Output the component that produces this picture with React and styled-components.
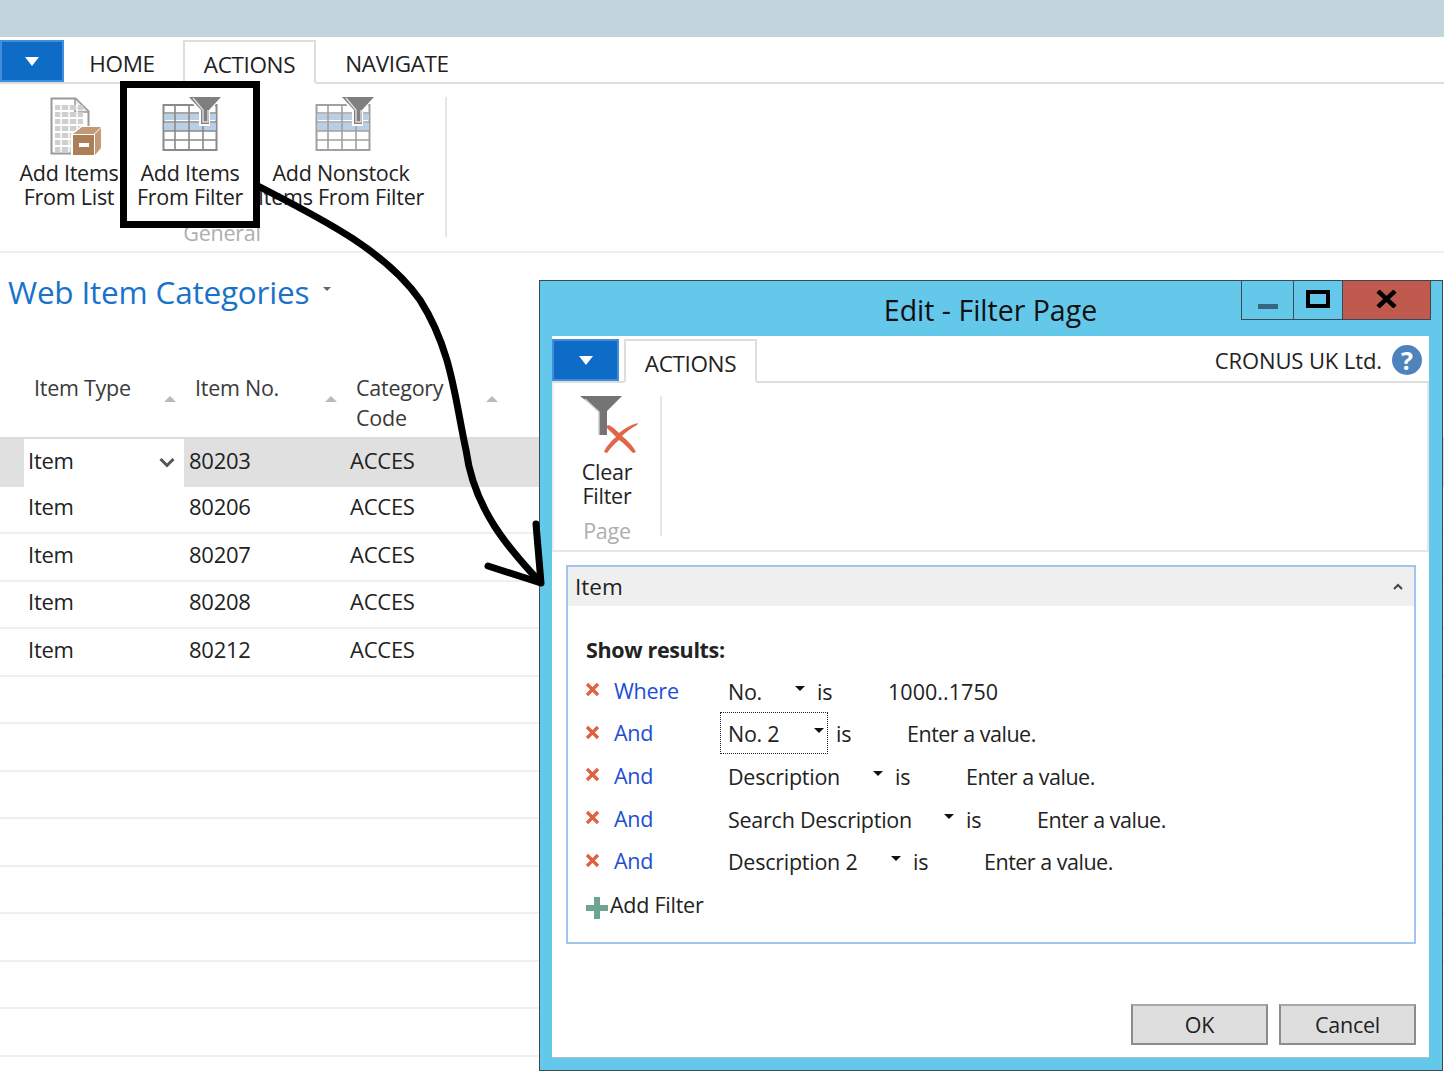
import React from "react";
import styled, { createGlobalStyle } from "styled-components";

const Global = createGlobalStyle`
  html, body { margin: 0; padding: 0; background: #fff; }
  body { font-family: "Open Sans", "Noto Sans", "Liberation Sans", sans-serif; color: #222; font-size: 21.5px; letter-spacing: -0.25px; }
`;

const Page = styled.div`
  position: relative;
  width: 1444px;
  height: 1073px;
  overflow: hidden;
  background: #fff;
`;
const TopBar = styled.div`height: 37px; background: #c3d5dc;`;
const TabRow = styled.div`
  display: flex;
  align-items: flex-end;
  height: ${p => p.$h}px;
  border-bottom: 2px solid #dedede;
  box-sizing: border-box;
`;
const MenuButton = styled.div`
  width: ${p => p.$w}px;
  height: 42px;
  box-sizing: border-box;
  background: #0f6cc6;
  border: 2px solid #3f8fdc;
  display: flex;
  align-items: center;
  justify-content: center;
`;
const Tri = styled.span`
  width: 0; height: 0;
  border-left: 7px solid transparent;
  border-right: 7px solid transparent;
  border-top: 9px solid #fff;
`;
const Tab = styled.div`
  height: ${p => p.$active ? 44 : 42}px;
  margin-bottom: ${p => p.$active ? -2 : 0}px;
  box-sizing: border-box;
  width: ${p => p.$w}px;
  margin-left: ${p => p.$ml || 0}px;
  display: flex;
  align-items: center;
  justify-content: center;
  padding: 4px ${p => p.$pr || 0}px 0 0;
  background: #fff;
  border: ${p => p.$active ? "2px solid #dedede" : "none"};
  border-bottom: ${p => p.$active ? "2px solid #fff" : "none"};
  font-size: 22.5px;
  letter-spacing: -0.35px;
`;
const Ribbon = styled.div`
  display: flex;
  height: 169px;
  box-sizing: border-box;
  padding-top: 13px;
  border-bottom: 2px solid #eee;
`;
const RibbonGroup = styled.div`
  display: flex;
  flex-direction: column;
  align-items: center;
  box-sizing: border-box;
  width: ${p => p.$w}px;
  padding-left: ${p => p.$pl}px;
  height: 141px;
`;
const GroupItems = styled.div`display: flex; align-self: stretch;`;
const GroupLabel = styled.div`
  margin-top: ${p => p.$mt || 12}px;
  color: #aeaeae;
  font-size: 21.5px;
  line-height: 24px;
`;
const Separator = styled.div`
  width: 2px;
  height: 140px;
  background: #e6e6e6;
  margin-left: ${p => p.$ml}px;
`;
const RibbonButton = styled.div`
  width: ${p => p.$w}px;
  display: flex;
  flex-direction: column;
  align-items: center;
  text-align: center;
  line-height: 24px;
  white-space: nowrap;
`;
const IconSlot = styled.div`
  height: ${p => p.$h}px;
  margin-left: ${p => p.$ox || 0}px;
  display: flex;
`;
const Title = styled.div`
  display: flex;
  align-items: center;
  height: 34px;
  margin: 21px 0 0 8px;
  color: #1a73c9;
  font-size: 31.5px;
  letter-spacing: -0.2px;
  gap: 14px;
`;
const TitleCaret = styled.span`
  width: 0; height: 0;
  border-left: 4px solid transparent;
  border-right: 4px solid transparent;
  border-top: 4px solid #666;
  margin-bottom: 4px;
`;
const HeaderRow = styled.div`
  display: flex;
  margin-top: 65px;
  height: 66px;
  padding-left: 28px;
  box-sizing: border-box;
  border-bottom: 2px solid #dcdcdc;
`;
const HeadCell = styled.div`
  width: 161px;
  padding-left: 6px;
  box-sizing: border-box;
  position: relative;
  line-height: 30px;
  color: #3a3a3a;
`;
const SortMark = styled.span`
  position: absolute;
  right: 13px;
  top: 23px;
  width: 0; height: 0;
  border-left: 6px solid transparent;
  border-right: 6px solid transparent;
  border-bottom: 6px solid #bbb;
`;
const Row = styled.div`
  display: flex;
  height: 47.5px;
  box-sizing: border-box;
  align-items: stretch;
  background: ${p => p.$sel ? "#e0e0e0" : "#fff"};
  border-bottom: ${p => p.$sel ? "none" : "2px solid #efefef"};
  padding-left: 24px;
`;
const Cell = styled.div`
  width: ${p => p.$w}px;
  padding-left: ${p => p.$pl}px;
  box-sizing: border-box;
  display: flex;
  align-items: center;
  justify-content: space-between;
  background: ${p => p.$white ? "#fff" : "transparent"};
  padding-bottom: ${p => p.$sel ? 6 : 6}px;
  font-size: 22px;
`;
const Chevron = styled.svg`margin-right: 9px; margin-top: 6px;`;

const Dialog = styled.div`
  position: absolute;
  left: 539px;
  top: 280px;
  width: 904px;
  height: 791px;
  box-sizing: border-box;
  background: #64c8ea;
  border: 1.5px solid #3b4a50;
  display: flex;
  flex-direction: column;
  padding: 0 13px 12px 12px;
`;
const WinBar = styled.div`
  height: 55px;
  position: relative;
  display: flex;
  justify-content: center;
  align-items: flex-end;
  font-size: 28.5px;
  line-height: 38px;
  color: #111;
  letter-spacing: 0;
  padding: 0 0 7px 0;
  box-sizing: border-box;
`;
const WinButtons = styled.div`
  position: absolute;
  right: -2px;
  top: 0;
  display: flex;
  height: 39px;
  border: 1.5px solid #3b4a50;
  border-top: none;
  box-sizing: border-box;
`;
const WinBtn = styled.div`
  width: ${p => p.$w}px;
  background: ${p => p.$red ? "#c0594e" : "transparent"};
  border-left: ${p => p.$first ? "none" : "1.5px solid #3b4a50"};
  box-sizing: border-box;
  display: flex;
  align-items: center;
  justify-content: center;
`;
const MinGlyph = styled.svg`margin-top: 14px;`;
const MaxGlyph = styled.svg`margin-bottom: 2px;`;
const CloseGlyph = styled.svg`margin-bottom: 2px;`;
const Inner = styled.div`
  flex: 1;
  background: #fff;
  display: flex;
  flex-direction: column;
  min-height: 0;
  border-bottom: 1.5px solid #aac4cf;
`;
const Company = styled.div`
  margin-left: auto;
  align-self: center;
  display: flex;
  align-items: center;
  gap: 10px;
  font-size: 22px;
  letter-spacing: -0.1px;
  padding: 2px 7px 0 0;
`;
const DialogActions = styled.div`
  display: flex;
  height: 169px;
  box-sizing: border-box;
  padding-top: 13px;
  border-bottom: 2px solid #e6e6e6;
  border-right: 2px solid #e6e6e6;
  border-left: 2px solid #eee;
`;
const Panel = styled.div`
  margin: 13px 13px 0 14px;
  height: 379px;
  box-sizing: border-box;
  border: 2px solid #a3c4ee;
`;
const PanelHead = styled.div`
  height: 39px;
  background: #efefef;
  display: flex;
  align-items: center;
  justify-content: space-between;
  padding: 0 11px 0 7px;
  font-size: 22.5px;
  letter-spacing: 0;
`;
const PanelBody = styled.div`padding: 29px 0 0 18px;`;
const ShowResults = styled.div`
  font-weight: 700;
  font-size: 21.5px;
  letter-spacing: -0.35px;
  line-height: 30px;
  margin-bottom: 5px;
`;
const FilterRow = styled.div`
  display: flex;
  align-items: center;
  height: 42.6px;
`;
const RemoveSlot = styled.div`width: 28px; display: flex; padding-bottom: 3px; margin-left: -1px; margin-right: 1px;`;
const Conj = styled.div`
  width: 114px;
  color: #1d4fd1;
  padding-bottom: 2px;
`;
const FieldSel = styled.div`
  width: ${p => p.$w}px;
  height: 42px;
  box-sizing: border-box;
  display: flex;
  align-items: center;
  justify-content: space-between;
  padding-right: 12px;
  position: relative;
`;
const FocusRing = styled.span`
  position: absolute;
  left: -8px;
  right: 8px;
  top: -1px;
  bottom: 1px;
  border: 1px dotted #222;
`;
const SmallCaret = styled.span`
  width: 0; height: 0;
  border-left: 5px solid transparent;
  border-right: 5px solid transparent;
  border-top: 5px solid #111;
  margin-bottom: 6px;
`;
const Is = styled.div`width: 71px; margin-left: ${p => p.$ml || 0}px;`;
const Value = styled.div`letter-spacing: ${p => p.$digits ? 0.05 : -0.5}px;`;
const AddFilter = styled.div`
  display: flex;
  align-items: center;
  height: 42px;
  gap: 2px;
  padding-top: 1px;
`;
const PlusGlyph = styled.svg`margin-top: 6px;`;
const Footer = styled.div`
  margin-top: auto;
  display: flex;
  justify-content: flex-end;
  gap: 11px;
  padding: 0 13px 12px 0;
`;
const Btn = styled.div`
  width: 137px;
  height: 41px;
  box-sizing: border-box;
  background: #dedede;
  border: 2px solid #8c8c8c;
  border-top-color: #a8a8a8;
  display: flex;
  align-items: center;
  justify-content: center;
`;
const HelpBadge = styled.div`
  width: 30px;
  height: 30px;
  border-radius: 50%;
  background: #4f83bd;
  color: #fff;
  font-weight: 700;
  font-size: 25px;
  line-height: 30px;
  text-align: center;
  letter-spacing: 0;
`;
const Highlight = styled.div`
  position: absolute;
  left: 120px;
  top: 81px;
  width: 140px;
  height: 147px;
  box-sizing: border-box;
  border: 7px solid #000;
  pointer-events: none;
`;
const ArrowSvg = styled.svg`
  position: absolute;
  left: 0; top: 0;
  pointer-events: none;
`;

const GridIcon = ({ color = "#8c8c8c", funnel = "#7f7f7f" }) => (
  <svg width="60" height="58" viewBox="0 1 60 58">
    <rect x="1.5" y="9" width="53" height="45" fill="#fff" stroke={color} strokeWidth="2" />
    <rect x="2" y="18" width="52" height="6" fill="#b9cfe6" />
    <rect x="2" y="27" width="52" height="8" fill="#b9cfe6" />
    {[12, 26, 40].map(x => <line key={x} x1={x + 1} x2={x + 1} y1="9" y2="54" stroke={color} strokeWidth="1.6" />)}
    {[17, 26, 35, 44].map(y => <line key={y} y1={y} y2={y} x1="2" x2="54" stroke={color} strokeWidth="1.6" />)}
    <path d="M26 1h33L48 16v14h-11V16z" fill="#fff" />
    <path d="M27 1h32L47 14v14h-8V14z" fill={funnel} />
    <path d="M31 2l10 12v12h5V14" fill="none" stroke="#ddd" strokeWidth="1.4" />
  </svg>
);
const ListIcon = () => (
  <svg width="54" height="60" viewBox="0 0 54 60">
    <path d="M1.5 1.5h24l13 13v42h-37z" fill="#fff" stroke="#999" strokeWidth="2" />
    <path d="M25 2v13h13" fill="#eee" stroke="#999" strokeWidth="1.5" />
    {[8, 15, 22, 29, 36, 43, 50].map(y => <rect key={y} x="5" y={y} width="28" height="5" fill="#cfcfcf" />)}
    {[11, 19, 27].map(x => <line key={x} x1={x} x2={x} y1="7" y2="55" stroke="#fff" strokeWidth="1.5" />)}
    <path d="M21 37l10-8h21v29H21z" fill="#fff" />
    <path d="M23 37l9-7h19l-7 7z" fill="#c39a75" />
    <rect x="23" y="38" width="21" height="20" fill="#ad7f58" />
    <path d="M45 37l6-6v20l-6 7z" fill="#c39a75" />
    <rect x="29" y="46" width="10" height="4" fill="#fff" />
  </svg>
);
const ClearFilterIcon = () => (
  <svg width="60" height="58" viewBox="0 0 60 58">
    <path d="M0 0h42L27 15v24h-8V15z" fill="#747474" />
    <path d="M5 3l14 13v23" fill="none" stroke="#cfcfcf" strokeWidth="1.4" />
    <path d="M28 29c4 1 8 5 11 8 5-4 11-8 19-10l-1 2c-6 3-11 7-15 11 5 4 11 10 14 16l-3 1c-4-4-9-10-14-13-5 4-9 9-12 13l-3-1c2-5 7-11 12-15-3-3-7-7-10-10z" fill="#e0664a" />
  </svg>
);
const RemoveX = () => (
  <svg width="15" height="15" viewBox="0 0 15 15">
    <path d="M2 2l11 11M13 2L2 13" stroke="#e0613f" strokeWidth="3.2" />
  </svg>
);

const rows = [
  ["80203", true], ["80206"], ["80207"], ["80208"], ["80212"],
  [""], [""], [""], [""], [""], [""], [""], [""],
];
const filters = [
  ["Where", "No.", 89, "1000..1750", false, true],
  ["And", "No. 2", 108, "Enter a value.", true],
  ["And", "Description", 167, "Enter a value."],
  ["And", "Search Description", 238, "Enter a value."],
  ["And", "Description 2", 185, "Enter a value."],
];

export default function App() {
  return (
    <Page>
      <Global />
      <TopBar />
      <TabRow $h={47}>
        <MenuButton $w={64}><Tri /></MenuButton>
        <Tab $w={119} $pr={3}>HOME</Tab>
        <Tab $w={133} $active>ACTIONS</Tab>
        <Tab $w={164} $pr={2}>NAVIGATE</Tab>
      </TabRow>
      <Ribbon>
        <RibbonGroup $w={428} $pl={16}>
          <GroupItems>
            <RibbonButton $w={106}><IconSlot $h={64} $ox={16}><ListIcon /></IconSlot>Add Items<br />From List</RibbonButton>
            <RibbonButton $w={136}><IconSlot $h={64} $ox={4}><GridIcon color="#8a8a8a" /></IconSlot>Add Items<br />From Filter</RibbonButton>
            <RibbonButton $w={166}><IconSlot $h={64} $ox={8}><GridIcon color="#a0a0a0" /></IconSlot>Add Nonstock<br />Items From Filter</RibbonButton>
          </GroupItems>
          <GroupLabel $mt={12}>General</GroupLabel>
        </RibbonGroup>
        <Separator $ml={17} />
      </Ribbon>
      <Title>Web Item Categories<TitleCaret /></Title>
      <HeaderRow>
        <HeadCell>Item Type<SortMark /></HeadCell>
        <HeadCell>Item No.<SortMark /></HeadCell>
        <HeadCell>Category<br />Code<SortMark /></HeadCell>
      </HeaderRow>
      {rows.map(([no, sel], i) => (
        <Row key={i} $sel={sel}>
          <Cell $w={160} $pl={4} $white={sel} $sel={sel}>
            {no && "Item"}
            {sel && (
              <Chevron width="16" height="11" viewBox="0 0 16 11">
                <path d="M1.5 2l6.5 6.5L14.5 2" fill="none" stroke="#555" strokeWidth="3" />
              </Chevron>
            )}
          </Cell>
          <Cell $w={161} $pl={5} $sel={sel}>{no}</Cell>
          <Cell $w={161} $pl={5} $sel={sel}>{no && "ACCES"}</Cell>
        </Row>
      ))}

      <Dialog>
        <WinBar>
          Edit - Filter Page
          <WinButtons>
            <WinBtn $w={51} $first>
              <MinGlyph width="20" height="6" viewBox="0 0 20 6"><rect width="20" height="5" fill="#33687f" /></MinGlyph>
            </WinBtn>
            <WinBtn $w={49}>
              <MaxGlyph width="24" height="18" viewBox="0 0 24 18"><rect x="2" y="2" width="20" height="14" fill="none" stroke="#000" strokeWidth="4" /></MaxGlyph>
            </WinBtn>
            <WinBtn $w={88} $red>
              <CloseGlyph width="21" height="18" viewBox="0 0 21 18"><path d="M2 1l17 16M19 1L2 17" stroke="#000" strokeWidth="4.5" /></CloseGlyph>
            </WinBtn>
          </WinButtons>
        </WinBar>
        <Inner>
          <TabRow $h={47}>
            <MenuButton $w={67}><Tri /></MenuButton>
            <Tab $w={133} $ml={5} $active>ACTIONS</Tab>
            <Company>CRONUS UK Ltd.<HelpBadge>?</HelpBadge></Company>
          </TabRow>
          <DialogActions>
            <RibbonGroup $w={106} $pl={0}>
              <RibbonButton $w={106}>
                <IconSlot $h={64} $ox={6}><ClearFilterIcon /></IconSlot>
                Clear<br />Filter
              </RibbonButton>
              <GroupLabel $mt={11}>Page</GroupLabel>
            </RibbonGroup>
            <Separator $ml={0} />
          </DialogActions>
          <Panel>
            <PanelHead>
              Item
              <svg width="10" height="7" viewBox="0 0 10 7"><path d="M1 6l4-4 4 4" fill="none" stroke="#444" strokeWidth="2" /></svg>
            </PanelHead>
            <PanelBody>
              <ShowResults>Show results:</ShowResults>
              {filters.map(([conj, field, w, val, focus, digits], i) => (
                <FilterRow key={i}>
                  <RemoveSlot><RemoveX /></RemoveSlot>
                  <Conj>{conj}</Conj>
                  <FieldSel $w={w}>
                    {field}
                    <SmallCaret />
                    {focus && <FocusRing />}
                  </FieldSel>
                  <Is>is</Is>
                  <Value $digits={digits}>{val}</Value>
                </FilterRow>
              ))}
              <AddFilter>
                <PlusGlyph width="22" height="22" viewBox="0 0 22 22"><path d="M8 0h6v8h8v6h-8v8H8v-8H0V8h8z" fill="#6ea590" /></PlusGlyph>
                Add Filter
              </AddFilter>
            </PanelBody>
          </Panel>
          <Footer>
            <Btn>OK</Btn>
            <Btn>Cancel</Btn>
          </Footer>
        </Inner>
      </Dialog>

      <Highlight />
      <ArrowSvg width="1444" height="1073" viewBox="0 0 1444 1073">
        <path d="M258 186 C 320 218, 385 250, 420 300 C 452 350, 455 400, 466 450 C 474 510, 510 550, 540 582" fill="none" stroke="#000" strokeWidth="7" strokeLinecap="round" />
        <path d="M536 524 L541 583 L488 566" fill="none" stroke="#000" strokeWidth="7" strokeLinecap="round" strokeLinejoin="round" />
      </ArrowSvg>
    </Page>
  );
}
